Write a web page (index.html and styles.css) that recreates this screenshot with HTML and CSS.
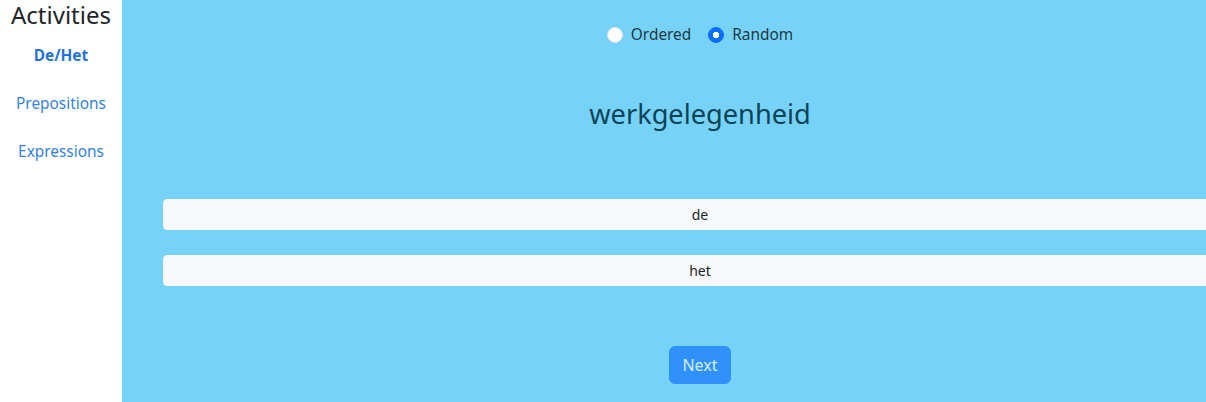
FILE: index.html
```html
<!DOCTYPE html>
<html lang="en">
<head>
    <meta charset="UTF-8">
    <meta name="viewport" content="width=device-width, initial-scale=1.0">
    <title>Activities</title>
    <link rel="stylesheet" href="styles.css">
</head>
<body>
    <div class="layout">
        <!-- Sidebar with activity links -->
        <aside class="sidebar">
            <h1>Activities</h1>
            <nav class="activity-nav">
                <a href="#" class="active">De/Het</a>
                <a href="#">Prepositions</a>
                <a href="#">Expressions</a>
            </nav>
        </aside>

        <!-- Exercise area -->
        <main class="exercise">
            <div class="mode">
                <label><input type="radio" name="mode" value="ordered"> Ordered</label>
                <label><input type="radio" name="mode" value="random" checked> Random</label>
            </div>

            <h2 class="word">werkgelegenheid</h2>

            <div class="choices">
                <button class="choice">de</button>
                <button class="choice">het</button>
            </div>

            <div class="actions">
                <button class="next" disabled>Next</button>
            </div>
        </main>
    </div>
</body>
</html>
```

FILE: styles.css
```css
/* General body styling */
body {
    font-family: "Noto Sans", "Open Sans", sans-serif;
    margin: 0;
    padding: 0;
    color: #212529;
    overflow: hidden;
}

.layout {
    display: flex;
    height: 100vh;
}

/* Sidebar */
.sidebar {
    flex: 0 0 122px;
    background-color: #fff;
    text-align: center;
}

.sidebar h1 {
    margin: 0;
    font-size: 24px;
    font-weight: 400;
    line-height: 29px;
}

.activity-nav {
    display: flex;
    flex-direction: column;
    margin-top: 3px;
}

.activity-nav a {
    padding: 12px 0;
    line-height: 24px;
    font-size: 15.4px;
    color: #3381e6;
    text-decoration: none;
}

.activity-nav a.active {
    font-weight: 700;
    color: #1f72e3;
}

/* Exercise area */
.exercise {
    flex: 0 0 1074px;
    padding: 23px 41px 0;
    background-color: #76d3f7;
}

.mode {
    display: flex;
    justify-content: center;
    gap: 17px;
    line-height: 24px;
    font-size: 15.4px;
    color: #1d3946;
}

.mode label {
    display: flex;
    align-items: center;
    gap: 8px;
}

.mode input {
    appearance: none;
    margin: 0;
    width: 16px;
    height: 16px;
    border-radius: 50%;
    background-color: #fff;
    border: 1px solid #dee2e6;
}

.mode input:checked {
    background-color: #0d6efd;
    border-color: #0d6efd;
    background-image: radial-gradient(circle, #fff 0 3px, transparent 3.5px);
}

.word {
    margin: 50px 0 0;
    text-align: center;
    font-size: 27.2px;
    font-weight: 400;
    line-height: 34px;
    color: #0b4458;
}

.choices {
    display: flex;
    flex-direction: column;
    gap: 25px;
    margin-top: 68px;
}

.choice {
    height: 31px;
    padding: 4px 8px;
    font-family: inherit;
    font-size: 14px;
    color: #212529;
    background-color: #f8f9fa;
    border: 1px solid #f8f9fa;
    border-radius: 4px;
}

.actions {
    display: flex;
    justify-content: center;
    margin-top: 60px;
}

.next {
    height: 38px;
    padding: 6px 12px;
    font-family: inherit;
    font-size: 16px;
    color: #fff;
    background-color: #0d6efd;
    border: 1px solid #0d6efd;
    border-radius: 6px;
    opacity: 0.65;
}
```
